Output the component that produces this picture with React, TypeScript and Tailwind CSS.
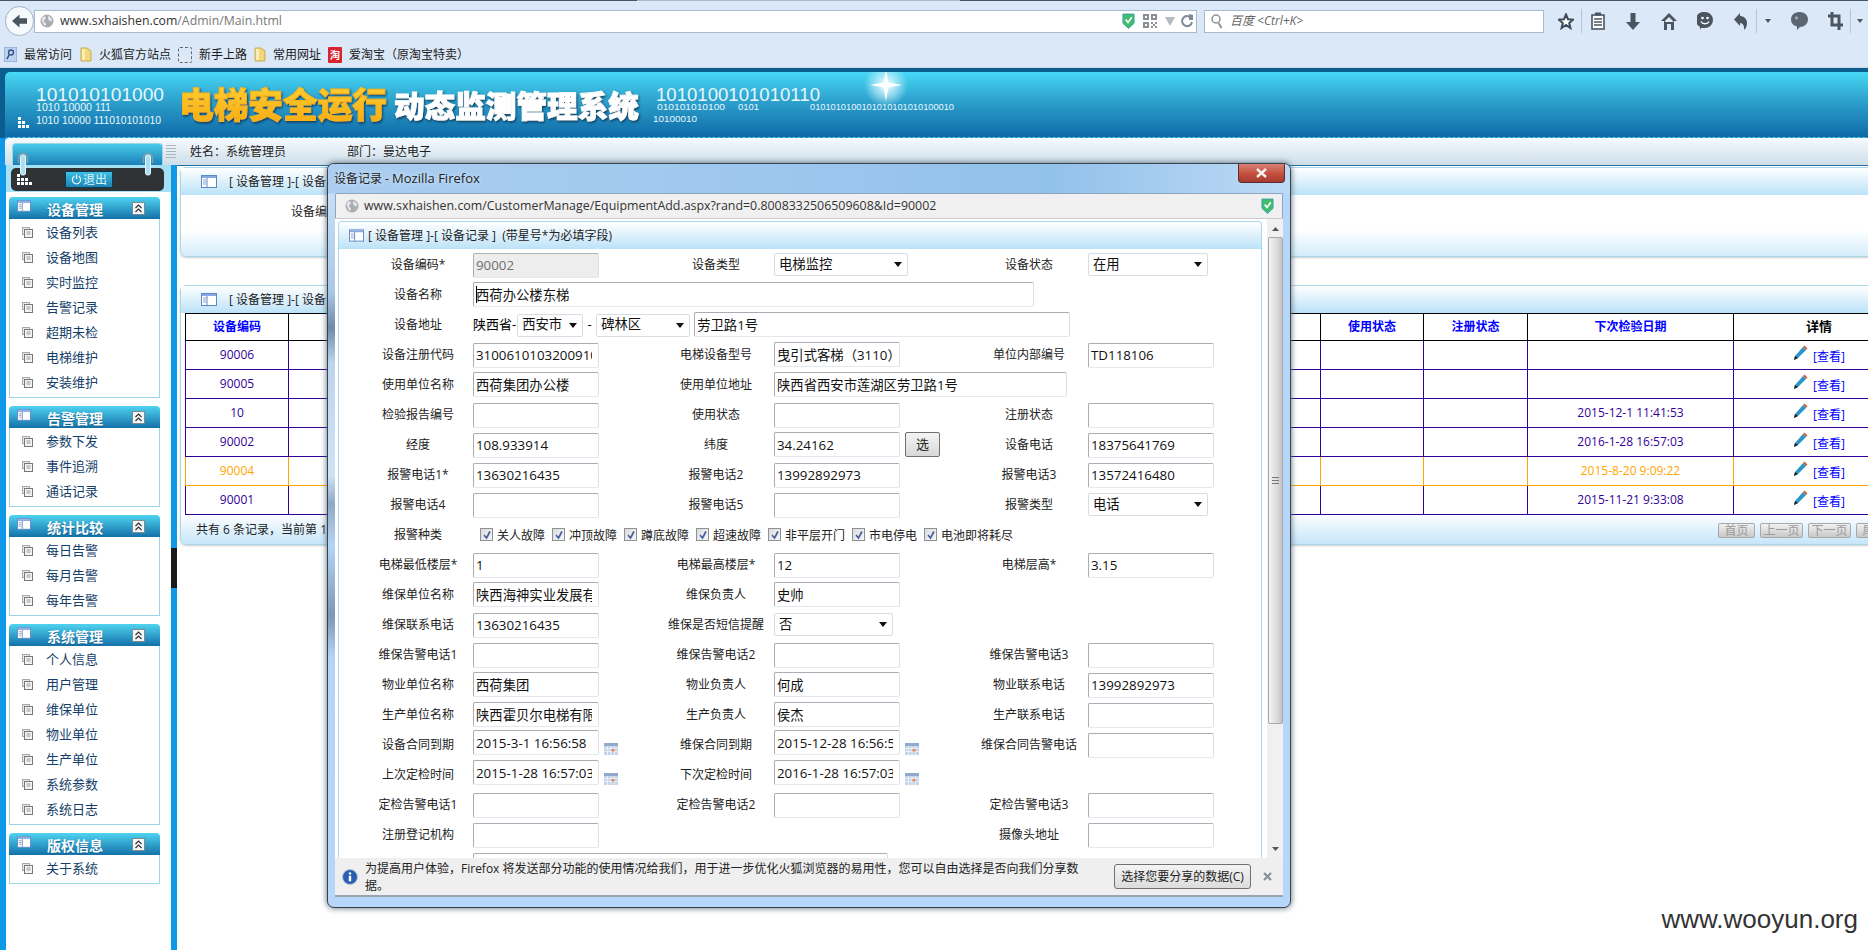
import React from "react"

// -- small drawn icons --
const Globe = ({ className = "" }: { className?: string }) => (
    <svg viewBox="0 0 14 14" className={className}>
        <circle cx="7" cy="7" r="6.5" fill="#a9adb2" />
        <path d="M3 3c2-1 3 0 3 1s-2 1-2 3 2 1 2 3-1 2-2 1-1-3-2-4 0-3 1-4zM9 2c1 1 3 2 3 4s-1 1-2 1-2-2-2-3 0-2 1-2z" fill="#e6e8ea" />
    </svg>
)

const Shield = ({ className = "" }: { className?: string }) => (
    <svg viewBox="0 0 14 17" className={className}>
        <path d="M1 1h12v10l-6 5.500-6-5.500z" fill="#3fbf6a" stroke="#3f9fb8" strokeWidth="1" />
        <path d="M4 7l2.500 3L10.500 4.500" fill="none" stroke="#ffffff" strokeWidth="1.800" />
    </svg>
)

const PanelIcon = ({ className = "" }: { className?: string }) => (
    <svg viewBox="0 0 16 13" className={className}>
        <rect x="0.500" y="0.500" width="15" height="12" fill="#ffffff" stroke="#5f86c8" />
        <rect x="1" y="1" width="14" height="2" fill="#88a8e0" />
        <path d="M6 3v9" stroke="#5f86c8" />
        <path d="M2 5h3M2 7h3M2 9h3" stroke="#8aa0c8" />
    </svg>
)

const ItemIcon = () => (
    <svg viewBox="0 0 11 11" className="w-[11px] h-[11px] shrink-0">
        <rect x="0.500" y="0.500" width="7" height="7" fill="#e8e8e8" stroke="#aaaaaa" />
        <rect x="2.500" y="2.500" width="8" height="8" fill="#f4f4f4" stroke="#777777" />
        <path d="M4.500 5h4M4.500 7h4" stroke="#999999" />
    </svg>
)

const CollapseIcon = () => (
    <svg viewBox="0 0 13 13" className="w-[13px] h-[13px]">
        <rect x="0.500" y="0.500" width="12" height="12" fill="#f4f6f7" stroke="#7d8b94" />
        <path d="M3.500 6l3-3 3 3M3.500 10l3-3 3 3" fill="none" stroke="#333333" strokeWidth="1.200" />
    </svg>
)

const Pencil = () => (
    <svg viewBox="0 0 15 16" className="w-[15px] h-[16px]">
        <path d="M1 15l1-4 8-9 3 3-8 8z" fill="#2d94c8" />
        <path d="M10 2l1.500-1.500 3 3L13 5z" fill="#c9603a" />
        <path d="M1 15l1-4 3 2z" fill="#1b1b1b" />
    </svg>
)

const Calendar = () => (
    <svg viewBox="0 0 14 12" className="w-[14px] h-[12px]">
        <rect width="14" height="12" fill="#c5d3e6" />
        <rect width="14" height="3" fill="#8fa9cf" />
        <path d="M0 5.500h14M0 8.500h14M3.500 3v9M7 3v9M10.500 3v9" stroke="#e9eff7" />
        <rect x="7.500" y="6" width="3" height="2.500" fill="#e2835e" />
    </svg>
)

const Caret = () => (
    <svg viewBox="0 0 8 5" className="w-[8px] h-[5px] shrink-0">
        <path d="M0 0h8L4 5z" fill="#111111" />
    </svg>
)

const ToolIcon = ({ w, line, children }: { w: string; line?: boolean; children: React.ReactNode }) => (
    <div className={`${w} h-[24px] flex items-center justify-center ${line ? "border-l border-[#b6c6d8]" : ""}`}>
        {children}
    </div>
)

// -- browser chrome --
const Toolbar = () => (
    <div className="flex items-center ml-[7px]">
        <ToolIcon w="w-[30px]">
            <svg viewBox="0 0 16 17" className="w-[16px] h-[17px]">
                <path d="M8 1.500l2 4.700 5 .5-3.800 3.300 1.200 5L8 12l-4.400 3 1.200-5L1 6.700l5-.5z" fill="#ffffff" stroke="#3f4a55" strokeWidth="2" />
            </svg>
        </ToolIcon>
        <ToolIcon w="w-[32px]" line>
            <svg viewBox="0 0 14 18" className="w-[14px] h-[18px]">
                <rect x="1" y="3" width="12" height="14" fill="#ffffff" stroke="#4a5560" strokeWidth="1.600" />
                <rect x="4" y="0.500" width="6" height="3" fill="#4a5560" />
                <path d="M3 7h8M3 10h8M3 13h8" stroke="#4a5560" strokeWidth="1.300" />
            </svg>
        </ToolIcon>
        <ToolIcon w="w-[40px]">
            <svg viewBox="0 0 14 17" className="w-[14px] h-[17px]">
                <path d="M4.500 0h5v9H14l-7 8-7-8h4.500z" fill="#4a5560" />
            </svg>
        </ToolIcon>
        <ToolIcon w="w-[32px]">
            <svg viewBox="0 0 16 17" className="w-[16px] h-[17px]">
                <path d="M8 0l8 8h-3v9h-3v-6H6v6H3V8H0z" fill="#4a5560" />
                <path d="M8 4l4 4v1H4V8z" fill="#dfe9f5" />
            </svg>
        </ToolIcon>
        <ToolIcon w="w-[40px]">
            <svg viewBox="0 0 16 18" className="w-[16px] h-[18px]">
                <path d="M8 0a8 8 0 0 1 0 16H4l-1 2v-3A8 8 0 0 1 8 0z" fill="#4a5560" />
                <circle cx="5.500" cy="6" r="1.300" fill="#ffffff" />
                <circle cx="10.500" cy="6" r="1.300" fill="#ffffff" />
                <path d="M4 9.500c1.500 3 6.500 3 8 0" fill="none" stroke="#ffffff" strokeWidth="1.400" />
            </svg>
        </ToolIcon>
        <ToolIcon w="w-[31px]">
            <svg viewBox="0 0 14 17" className="w-[14px] h-[17px]">
                <path d="M6 0v3c4 0 7 3 7 7 0 3-1 5-3 7 .5-4-1-7-4-7v3L0 6.500z" fill="#4a5560" />
            </svg>
        </ToolIcon>
        <ToolIcon w="w-[22px]" line>
            <svg viewBox="0 0 6 4" className="w-[6px] h-[4px]"><path d="M0 0h6L3 4z" fill="#4a5560" /></svg>
        </ToolIcon>
        <ToolIcon w="w-[42px]">
            <svg viewBox="0 0 17 18" className="w-[17px] h-[18px]">
                <path d="M8.500 0c5 0 8.500 3 8.500 7.500S13 15 9 15l-3 3v-3.500C2 13.500 0 11 0 7.500 0 3 3.500 0 8.500 0z" fill="#5a6671" />
                <circle cx="5.500" cy="6" r="1.400" fill="#aeb6bd" />
            </svg>
        </ToolIcon>
        <ToolIcon w="w-[30px]">
            <svg viewBox="0 0 15 18" className="w-[15px] h-[18px]">
                <path d="M4 0v13h11M0 4h11v14" fill="none" stroke="#4a5560" strokeWidth="3" />
            </svg>
        </ToolIcon>
        <ToolIcon w="w-[18px]" line>
            <svg viewBox="0 0 6 4" className="w-[6px] h-[4px]"><path d="M0 0h6L3 4z" fill="#4a5560" /></svg>
        </ToolIcon>
    </div>
)

const Folder = () => (
    <svg viewBox="0 0 12 15" className="w-[12px] h-[15px]">
        <path d="M1 1h6l4 3v10H1z" fill="#f1d77e" stroke="#c8a94c" />
        <rect x="2" y="2" width="3" height="11" fill="#fbeeb5" />
    </svg>
)

const Bookmark = ({ icon, text, className }: { icon: React.ReactNode; text: string; className: string }) => (
    <div className={`flex items-center ${className}`}>
        {icon}
        <span className="ml-[7px] text-[12px] text-[#1b1b1b] whitespace-nowrap">{text}</span>
    </div>
)

const BrowserChrome = () => (
    <div className="bg-[#dbe8f7] h-[68px]">
        <div className="h-[1px] flex">
            <div className="w-[637px] bg-[#46566a]" />
            <div className="w-[323px] bg-[#aab8c8]" />
            <div className="flex-1 bg-[#46566a]" />
        </div>
        <div className="flex items-center h-[37px] pt-[3px] pl-[5px]">
            <div className="w-[29px] h-[30px] rounded-full bg-[#f7fafd] border border-[#9fb1c6] flex items-center justify-center z-10">
                <svg viewBox="0 0 16 14" className="w-[15px] h-[14px]">
                    <path d="M8 0v4h8v6H8v4L0 7z" fill="#4a5560" />
                </svg>
            </div>
            <div className="w-[1163px] h-[23px] bg-white border border-[#a8bace] flex items-center pl-[5px] pr-[3px]">
                <Globe className="w-[14px] h-[14px]" />
                <span className="ml-[6px] text-[12.3px] text-[#777777]">
                    <span className="text-[#333333]">www.sxhaishen.com</span>/Admin/Main.html
                </span>
                <div className="ml-auto flex items-center">
                    <Shield className="w-[13px] h-[16px]" />
                    <svg viewBox="0 0 14 14" className="w-[14px] h-[14px] ml-[8px]">
                        <path d="M0 0h6v6H0zM8 0h6v6H8zM0 8h6v6H0zM8 8h2v2H8zM12 8h2v2h-2zM10 10h2v2h-2zM8 12h2v2H8zM12 12h2v2h-2z" fill="#8a8f96" />
                        <path d="M2 2h2v2H2zM10 2h2v2h-2zM2 10h2v2H2z" fill="#ffffff" />
                    </svg>
                    <svg viewBox="0 0 10 9" className="w-[10px] h-[9px] ml-[8px]"><path d="M0 0h10L5 9z" fill="#b5bac0" /></svg>
                    <svg viewBox="0 0 12 14" className="w-[12px] h-[14px] ml-[6px]">
                        <path d="M10 4a5 5 0 1 0 1 4" fill="none" stroke="#7f8a96" strokeWidth="2" />
                        <path d="M8 0v6h4V1z" fill="#7f8a96" />
                    </svg>
                </div>
            </div>
            <div className="w-[340px] h-[23px] ml-[7px] bg-white border border-[#a8bace] flex items-center pl-[6px]">
                <svg viewBox="0 0 12 15" className="w-[12px] h-[15px]">
                    <circle cx="5" cy="5" r="4" fill="none" stroke="#8b939b" strokeWidth="1.500" />
                    <path d="M7.500 9l3 5" stroke="#8b939b" strokeWidth="2" />
                </svg>
                <span className="ml-[7px] text-[12px] italic text-[#666666]">百度 &lt;Ctrl+K&gt;</span>
            </div>
            <Toolbar />
        </div>
        <div className="flex items-center h-[30px] pt-[4px] border-b border-[#c8d8ea]">
            <Bookmark className="ml-[4px]" text="最常访问" icon={
                <svg viewBox="0 0 13 15" className="w-[13px] h-[15px]">
                    <rect width="13" height="15" fill="#bcd2ee" stroke="#7d9cc5" />
                    <circle cx="7" cy="5.500" r="2.500" fill="none" stroke="#2d4f86" strokeWidth="1.300" />
                    <path d="M5 8l-2 4" stroke="#2d4f86" strokeWidth="1.500" />
                </svg>
            } />
            <Bookmark className="ml-[8px]" text="火狐官方站点" icon={<Folder />} />
            <Bookmark className="ml-[7px]" text="新手上路" icon={
                <div className="w-[14px] h-[16px] border border-dashed border-[#666666] rounded-[2px]" />
            } />
            <Bookmark className="ml-[7px]" text="常用网址" icon={<Folder />} />
            <Bookmark className="ml-[7px]" text="爱淘宝（原淘宝特卖）" icon={
                <div className="w-[14px] h-[16px] bg-[#d9232e] rounded-[1px] flex items-center justify-center text-[10px] leading-none font-bold text-white">淘</div>
            } />
        </div>
    </div>
)

// -- banner --
const Banner = () => (
    <div className="h-[70px] bg-[#0b5c8f] pt-[4px] pl-[5px]">
        <div className="h-[66px] rounded-tl-[5px] bg-[linear-gradient(#47d8f6,#2fa6d0_40%,#0f6aa8)] border-b border-dashed border-[#3b8fc0] overflow-hidden">
            <svg width="1000" height="66" viewBox="5 72 1000 66">
                <defs>
                    <linearGradient id="gold" x1="0" y1="0" x2="0" y2="1">
                        <stop offset="0" stopColor="#ffd53a" />
                        <stop offset="1" stopColor="#f7a80f" />
                    </linearGradient>
                    <radialGradient id="glow">
                        <stop offset="0" stopColor="#ffffff" />
                        <stop offset="0.500" stopColor="#d8f6ff" stopOpacity="0.600" />
                        <stop offset="1" stopColor="#d8f6ff" stopOpacity="0" />
                    </radialGradient>
                    <filter id="shade" x="-5%" y="-20%" width="110%" height="140%">
                        <feDropShadow dx="1" dy="1.500" stdDeviation="1" floodColor="#0a3350" floodOpacity="0.900" />
                    </filter>
                </defs>
                <g fontFamily="'Liberation Sans', sans-serif" fill="#e8f7fd">
                    <text x="36" y="101" fontSize="19" textLength="128" lengthAdjust="spacingAndGlyphs">101010101000</text>
                    <text x="36" y="111" fontSize="10" textLength="75" lengthAdjust="spacingAndGlyphs">1010 10000 111</text>
                    <text x="36" y="124" fontSize="10" textLength="125" lengthAdjust="spacingAndGlyphs">1010 10000 111010101010</text>
                    <text x="656" y="101" fontSize="18" textLength="164" lengthAdjust="spacingAndGlyphs">1010100101010110</text>
                    <text x="657" y="110" fontSize="9" textLength="68" lengthAdjust="spacingAndGlyphs">010101010100</text>
                    <text x="738" y="110" fontSize="9" textLength="21" lengthAdjust="spacingAndGlyphs">0101</text>
                    <text x="810" y="110" fontSize="9" textLength="144" lengthAdjust="spacingAndGlyphs">0101010100101010101010100010</text>
                    <text x="653" y="122" fontSize="9" textLength="44" lengthAdjust="spacingAndGlyphs">10100010</text>
                </g>
                <path d="M18 117h3v3h-3zM18 121h3v3h-3zM22 121h3v3h-3zM18 125h3v3h-3zM22 125h3v3h-3zM26 125h3v3h-3z" fill="#ffffff" />
                <g fontFamily="'Noto Sans CJK SC', sans-serif" fontWeight="900" filter="url(#shade)">
                    <text x="179" y="118" fontSize="35" textLength="208" lengthAdjust="spacingAndGlyphs" fill="url(#gold)" stroke="#f7b51a" strokeWidth="1">电梯安全运行</text>
                    <text x="394" y="117" fontSize="30" textLength="245" lengthAdjust="spacingAndGlyphs" fill="#ffffff" stroke="#ffffff" strokeWidth="0.800">动态监测管理系统</text>
                </g>
                <circle cx="886" cy="85" r="22" fill="url(#glow)" />
                <path d="M886 70l2.500 12.500L902 85l-13.500 2.500L886 101l-2.500-13.500L870 85l13.500-2.500z" fill="#ffffff" />
            </svg>
        </div>
    </div>
)

// -- sidebar --
const menus = [
    { title: "设备管理", items: ["设备列表", "设备地图", "实时监控", "告警记录", "超期未检", "电梯维护", "安装维护"] },
    { title: "告警管理", items: ["参数下发", "事件追溯", "通话记录"] },
    { title: "统计比较", items: ["每日告警", "每月告警", "每年告警"] },
    { title: "系统管理", items: ["个人信息", "用户管理", "维保单位", "物业单位", "生产单位", "系统参数", "系统日志"] },
    { title: "版权信息", items: ["关于系统"] },
]

const Sidebar = () => (
    <aside className="w-[177px] shrink-0 bg-[#0e99e8] flex">
        <div className="w-[165px] ml-[6px] bg-white">
            <div className="h-[27px] bg-[#a6e0f4] pt-[3px] pl-[5px]">
                <div className="w-[153px] h-[23px] rounded-[5px] bg-[#2f3336] flex items-center pl-[6px]">
                    <svg viewBox="0 0 15 11" className="w-[15px] h-[11px]">
                        <path d="M0 0h3v3H0zM0 4h3v3H0zM4 4h3v3H4zM0 8h3v3H0zM4 8h3v3H4zM8 8h3v3H8zM12 8h3v3h-3zM8 4h3v3H8z" fill="#ffffff" />
                    </svg>
                    <div className="ml-[33px] w-[48px] h-[17px] border border-[#0d3a4e] bg-[linear-gradient(#3fbfe3,#1c84b5)] flex items-center justify-center gap-[1px] text-[12px] text-[#d9f3fb]">
                        <svg viewBox="0 0 12 12" className="w-[11px] h-[11px]">
                            <path d="M3.500 2.500a4.500 4.500 0 1 0 5 0" fill="none" stroke="#e6f7fc" strokeWidth="1.400" />
                            <path d="M6 0.500v5" stroke="#e6f7fc" strokeWidth="1.400" />
                        </svg>
                        退出
                    </div>
                </div>
            </div>
            <div className="pl-[3px] pt-[5px] flex flex-col gap-[8px]">
                {menus.map((m) => (
                    <div key={m.title} className="w-[151px]">
                        <div className="h-[22px] rounded-t-[4px] bg-[linear-gradient(#4fd3f0,#1471a9)] flex items-start pl-[8px] relative">
                            <PanelIcon className="w-[14px] h-[12px] mt-[3px]" />
                            <span className="ml-[16px] mt-[3px] text-[14px] leading-[20px] font-bold text-white [text-shadow:0_1px_1px_#0d5e8c]">{m.title}</span>
                            <div className="ml-[29px] mt-[5px]"><CollapseIcon /></div>
                        </div>
                        <div className="border border-t-0 border-[#9ad6e6] pt-[1px] pb-[2px]">
                            {m.items.map((it) => (
                                <div key={it} className="h-[25px] flex items-center pl-[12px]">
                                    <ItemIcon />
                                    <span className="ml-[13px] text-[13px] text-[#143e68]">{it}</span>
                                </div>
                            ))}
                        </div>
                    </div>
                ))}
            </div>
        </div>
        <div className="w-[6px]">
            <div className="h-[383px]" />
            <div className="h-[40px] bg-[#1a1a1a]" />
        </div>
    </aside>
)

const Hook = ({ className }: { className: string }) => (
    <svg viewBox="0 0 12 24" className={`absolute w-[12px] h-[24px] ${className}`}>
        <path d="M1.500 11V6a4.500 4.500 0 0 1 9 0v5" fill="none" stroke="#8b9aa3" strokeWidth="1.500" />
        <rect x="3.500" y="3" width="5" height="20" rx="2" fill="#a9dff2" stroke="#e8f8fd" />
    </svg>
)

// -- main page behind the dialog --
type RowData = { id: string; next?: string; warn?: boolean }

const tableRows: RowData[] = [
    { id: "90006" },
    { id: "90005" },
    { id: "10", next: "2015-12-1 11:41:53" },
    { id: "90002", next: "2016-1-28 16:57:03" },
    { id: "90004", next: "2015-8-20 9:09:22", warn: true },
    { id: "90001", next: "2015-11-21 9:33:08" },
]

const CardHead = ({ children }: { children: React.ReactNode }) => (
    <div className="h-[27px] bg-[linear-gradient(#ffffff,#bbe2f8)] flex items-center pl-[20px]">
        <PanelIcon className="w-[16px] h-[13px]" />
        <span className="ml-[12px] text-[12px] text-[#222222]">{children}</span>
    </div>
)

const PageBtn = ({ text, w }: { text: string; w: string }) => (
    <div className={`${w} h-[15px] rounded-[2px] border border-[#a8a8a8] bg-[linear-gradient(#f2f2f2,#c8c8c8)] text-[12px] leading-[14px] text-[#9a9a9a] text-center`}>
        {text}
    </div>
)

const Main = () => (
    <main className="flex-1 min-w-0 overflow-hidden pl-[3px] pt-[1px] border-t border-[#246f9e]">
        <div className="w-[1760px] h-[90px] rounded-[6px] border border-[#a8d8ea] bg-[linear-gradient(#ffffff_70%,#d4edfb)] shadow-[0_1px_2px_#cccccc]">
            <CardHead>[ 设备管理 ]-[ 设备</CardHead>
            <div className="pl-[110px] pt-[8px] text-[12px] text-[#222222]">设备编</div>
        </div>
        <div className="w-[1760px] h-[260px] mt-[28px] rounded-[6px] border border-[#a8d8ea] bg-[linear-gradient(#ffffff_88%,#c6e6fa)] shadow-[0_1px_2px_#cccccc]">
            <CardHead>[ 设备管理 ]-[ 设备</CardHead>
            <table className="ml-[4px] w-[1720px] table-fixed border-collapse text-[12px] text-center">
                <colgroup>
                    <col className="w-[103px]" />
                    <col className="w-[1032px]" />
                    <col className="w-[103px]" />
                    <col className="w-[104px]" />
                    <col className="w-[206px]" />
                    <col />
                </colgroup>
                <thead>
                    <tr className="h-[27px] font-bold text-[#0000ff]">
                        <th className="border border-black">设备编码</th>
                        <th className="border border-black"></th>
                        <th className="border border-black">使用状态</th>
                        <th className="border border-black">注册状态</th>
                        <th className="border border-black">下次检验日期</th>
                        <th className="border border-black text-black text-[13px]">详情</th>
                    </tr>
                </thead>
                <tbody>
                    {tableRows.map((r) => (
                        <tr key={r.id} className={`h-[29px] ${r.warn ? "text-[#ffa500]" : "text-[#330099]"}`}>
                            <td className={`border ${r.warn ? "border-[#ffa500]" : "border-[#330099]"}`}>{r.id}</td>
                            <td className={`border ${r.warn ? "border-[#ffa500]" : "border-[#330099]"}`}></td>
                            <td className={`border ${r.warn ? "border-[#ffa500]" : "border-[#330099]"}`}></td>
                            <td className={`border ${r.warn ? "border-[#ffa500]" : "border-[#330099]"}`}></td>
                            <td className={`border ${r.warn ? "border-[#ffa500]" : "border-[#330099]"}`}>{r.next}</td>
                            <td className={`border ${r.warn ? "border-[#ffa500]" : "border-[#330099]"}`}>
                                <div className="flex items-start justify-center">
                                    <Pencil />
                                    <span className="ml-[5px] mt-[3px] text-[#0000ff]">[查看]</span>
                                </div>
                            </td>
                        </tr>
                    ))}
                </tbody>
            </table>
            <div className="flex items-center h-[30px]">
                <span className="w-[1537px] pl-[15px] shrink-0 text-[12px] text-[#222222]">共有 6 条记录，当前第 1</span>
                <div className="flex gap-[5px] shrink-0">
                    <PageBtn text="首页" w="w-[37px]" />
                    <PageBtn text="上一页" w="w-[43px]" />
                    <PageBtn text="下一页" w="w-[43px]" />
                    <PageBtn text="尾页" w="w-[37px]" />
                </div>
            </div>
        </div>
    </main>
)

// -- form controls in the dialog --
const Field = ({ value = "", className = "w-[126px]", disabled }: { value?: string; className?: string; disabled?: boolean }) => (
    <input
        readOnly
        value={value}
        className={`h-[25px] rounded-[2px] border border-[#abadb3] border-r-[#dbdfe6] border-b-[#e3e9ef] pl-[2px] pr-[6px] text-[13.33px] outline-none ${
            disabled ? "bg-[#ededed] border-[#b0b0b0] text-[#6d6d6d]" : "bg-white text-[#111111]"
        } ${className}`}
    />
)

const Sel = ({ text, className }: { text: string; className: string }) => (
    <div className={`h-[23px] mt-[1px] rounded-[2px] border border-[#d8dde3] bg-white flex items-center justify-between pl-[4px] pr-[5px] text-[13.33px] text-[#111111] shrink-0 ${className}`}>
        <span>{text}</span>
        <Caret />
    </div>
)

const DateField = ({ value }: { value: string }) => (
    <div className="flex items-end -mt-[2px] w-max">
        <Field value={value} />
        <div className="ml-[5px] h-[12px] flex"><Calendar /></div>
    </div>
)

type Cell = [string, React.ReactNode] | undefined

const Row = ({ a, b, c }: { a?: Cell; b?: Cell; c?: Cell }) => (
    <div className="grid grid-cols-[110px_188px_113px_201px_113px_1fr] h-[30px] items-start">
        <div className="h-[25px] leading-[25px] text-[12px] text-center text-[#222222]">{a?.[0]}</div>
        <div>{a?.[1]}</div>
        <div className="h-[25px] leading-[25px] text-[12px] text-center text-[#222222] pr-[3px] whitespace-nowrap">{b?.[0]}</div>
        <div>{b?.[1]}</div>
        <div className="h-[25px] leading-[25px] text-[12px] text-center text-[#222222] pr-[5px] whitespace-nowrap">{c?.[0]}</div>
        <div>{c?.[1]}</div>
    </div>
)

const Check = ({ text, w }: { text: string; w: string }) => (
    <div className={`${w} flex items-center shrink-0`}>
        <div className="w-[13px] h-[13px] border border-[#8e8f8f] bg-[linear-gradient(135deg,#d8dbe0,#f8f8f8)] flex items-center justify-center">
            <svg viewBox="0 0 10 10" className="w-[10px] h-[10px]">
                <path d="M2 5l2.500 3L8 1.500" fill="none" stroke="#4a5f9c" strokeWidth="1.700" />
            </svg>
        </div>
        <span className="ml-[4px] mt-[2px] text-[12px] text-[#222222] whitespace-nowrap">{text}</span>
    </div>
)

const EquipmentForm = () => (
    <div className="pl-[24px] pt-[3px]">
        <Row
            a={["设备编码*", <Field value="90002" disabled />]}
            b={["设备类型", <Sel text="电梯监控" className="w-[134px]" />]}
            c={["设备状态", <Sel text="在用" className="w-[120px]" />]}
        />
        <Row a={["设备名称", (
            <div className="relative w-max">
                <Field value="西荷办公楼东梯" className="w-[561px]" />
                <div className="absolute left-[3px] top-[4px] w-[1px] h-[17px] bg-black" />
            </div>
        )]} />
        <Row a={["设备地址", (
            <div className="flex items-center w-max text-[13px]">
                <span>陕西省-</span>
                <Sel text="西安市" className="w-[66px] ml-[1px]" />
                <span className="w-[13px] text-center">-</span>
                <Sel text="碑林区" className="w-[94px]" />
                <Field value="劳卫路1号" className="w-[376px] ml-[4px]" />
            </div>
        )]} />
        <Row
            a={["设备注册代码", <Field value="31006101032009100126" />]}
            b={["电梯设备型号", <Field value="曳引式客梯（3110）" />]}
            c={["单位内部编号", <Field value="TD118106" />]}
        />
        <Row
            a={["使用单位名称", <Field value="西荷集团办公楼" />]}
            b={["使用单位地址", <Field value="陕西省西安市莲湖区劳卫路1号" className="w-[293px]" />]}
        />
        <Row a={["检验报告编号", <Field />]} b={["使用状态", <Field />]} c={["注册状态", <Field />]} />
        <Row
            a={["经度", <Field value="108.933914" />]}
            b={["纬度", (
                <div className="flex w-max">
                    <Field value="34.24162" />
                    <div className="ml-[5px] w-[35px] h-[25px] rounded-[2px] border border-[#707070] bg-[linear-gradient(#f4f4f4,#d8d8d8)] text-[13px] leading-[23px] text-center text-[#222222]">选</div>
                </div>
            )]}
            c={["设备电话", <Field value="18375641769" />]}
        />
        <Row
            a={["报警电话1*", <Field value="13630216435" />]}
            b={["报警电话2", <Field value="13992892973" />]}
            c={["报警电话3", <Field value="13572416480" />]}
        />
        <Row a={["报警电话4", <Field />]} b={["报警电话5", <Field />]} c={["报警类型", <Sel text="电话" className="w-[120px]" />]} />
        <Row a={["报警种类", (
            <div className="flex items-center w-max h-[25px] pl-[7px]">
                <Check text="关人故障" w="w-[72px]" />
                <Check text="冲顶故障" w="w-[72px]" />
                <Check text="蹲底故障" w="w-[72px]" />
                <Check text="超速故障" w="w-[72px]" />
                <Check text="非平层开门" w="w-[84px]" />
                <Check text="市电停电" w="w-[72px]" />
                <Check text="电池即将耗尽" w="w-[90px]" />
            </div>
        )]} />
        <Row
            a={["电梯最低楼层*", <Field value="1" />]}
            b={["电梯最高楼层*", <Field value="12" />]}
            c={["电梯层高*", <Field value="3.15" />]}
        />
        <Row a={["维保单位名称", <Field value="陕西海神实业发展有限公司" />]} b={["维保负责人", <Field value="史帅" />]} />
        <Row a={["维保联系电话", <Field value="13630216435" />]} b={["维保是否短信提醒", <Sel text="否" className="w-[119px]" />]} />
        <Row a={["维保告警电话1", <Field />]} b={["维保告警电话2", <Field />]} c={["维保告警电话3", <Field />]} />
        <Row
            a={["物业单位名称", <Field value="西荷集团" />]}
            b={["物业负责人", <Field value="何成" />]}
            c={["物业联系电话", <Field value="13992892973" />]}
        />
        <Row
            a={["生产单位名称", <Field value="陕西霍贝尔电梯有限公司" />]}
            b={["生产负责人", <Field value="侯杰" />]}
            c={["生产联系电话", <Field />]}
        />
        <Row
            a={["设备合同到期", <DateField value="2015-3-1 16:56:58" />]}
            b={["维保合同到期", <DateField value="2015-12-28 16:56:58" />]}
            c={["维保合同告警电话", <Field />]}
        />
        <Row a={["上次定检时间", <DateField value="2015-1-28 16:57:03" />]} b={["下次定检时间", <DateField value="2016-1-28 16:57:03" />]} />
        <Row a={["定检告警电话1", <Field />]} b={["定检告警电话2", <Field />]} c={["定检告警电话3", <Field />]} />
        <Row a={["注册登记机构", <Field />]} c={["摄像头地址", <Field />]} />
        <Row a={["", <Field className="w-[415px]" />]} />
    </div>
)

const Dialog = () => (
    <div className="absolute left-[327px] top-[163px] w-[964px] h-[745px] rounded-[7px] border border-[#38424c] bg-[#b6d6fa] overflow-hidden shadow-[0_0_6px_#556677]">
        <div className="absolute left-0 top-[30px] bottom-[10px] w-[7px] bg-[linear-gradient(#c6dff5,#a9c8e6_14%,#6f8aa8_19%,#bcd4ec_24%,#cfe3f6_40%,#8fa9c4_44%,#b5d5f5_50%,#7d97b4_60%,#b5d5f5_66%,#b6d6fa)]" />
        <div className="h-[29px] flex justify-between bg-[linear-gradient(90deg,#aacdf0,#a0c8ee_40%,#92c1ea_75%,#bddaf6)]">
            <span className="ml-[6px] mt-[5px] text-[12px] leading-[18px] text-[#222222] [text-shadow:0_0_4px_#e6f2fc]">设备记录 - <span className="text-[13px]">Mozilla Firefox</span></span>
            <div className="mr-[5px] w-[47px] h-[19px] rounded-b-[4px] border border-t-0 border-[#5c2a2a] bg-[linear-gradient(#d98074,#c4503f_55%,#a53a2e)] flex items-center justify-center">
                <svg viewBox="0 0 11 10" className="w-[11px] h-[10px]">
                    <path d="M1 1l9 8M10 1l-9 8" stroke="#f4f4f4" strokeWidth="2.400" />
                </svg>
            </div>
        </div>
        <div className="mx-[7px]">
            <div className="h-[25px] rounded-t-[2px] border border-b-0 border-[#8aa6c2] bg-[#f0f0f0] flex items-center pl-[9px] pr-[8px]">
                <Globe className="w-[14px] h-[14px]" />
                <span className="ml-[5px] text-[12.4px] text-[#333333]">www.sxhaishen.com/CustomerManage/EquipmentAdd.aspx?rand=0.8008332506509608&amp;Id=90002</span>
                <Shield className="ml-auto w-[13px] h-[16px]" />
            </div>
            <div className="h-[640px] bg-white flex border-t border-[#c8ccd0]">
                <div className="flex-1 min-w-0 pl-[3px] pr-[5px] pt-[2px]">
                    <div className="h-full rounded-t-[4px] border border-b-0 border-[#a9d9f0] overflow-hidden">
                        <div className="h-[27px] bg-[linear-gradient(#ffffff,#bbe2f8)] flex items-center pl-[10px]">
                            <PanelIcon className="w-[15px] h-[13px]" />
                            <span className="ml-[4px] text-[12px] text-[#222222] whitespace-pre">[ 设备管理 ]-[ 设备记录 ]  (带星号*为必填字段)</span>
                        </div>
                        <EquipmentForm />
                    </div>
                </div>
                <div className="w-[16px] bg-[#f0f0f0] flex flex-col items-center">
                    <svg viewBox="0 0 7 4" className="w-[7px] h-[4px] mt-[8px]"><path d="M3.500 0L7 4H0z" fill="#555555" /></svg>
                    <div className="w-[15px] h-[487px] mt-[6px] rounded-[2px] border border-[#a8a8a8] bg-[linear-gradient(90deg,#f4f4f4,#dcdcdc_60%,#c4c4c4)] flex items-center justify-center">
                        <div className="w-[7px] h-[7px] border-y border-[#777777] flex items-center"><div className="w-full h-[1px] bg-[#777777]" /></div>
                    </div>
                    <svg viewBox="0 0 7 4" className="w-[7px] h-[4px] mt-auto mb-[7px]"><path d="M0 0h7L3.500 4z" fill="#555555" /></svg>
                </div>
            </div>
            <div className="h-[39px] bg-[#efefef] border-b-2 border-[#9aa4ae] flex items-center pl-[7px] pr-[10px]">
                <svg viewBox="0 0 16 16" className="w-[16px] h-[16px] shrink-0">
                    <circle cx="8" cy="8" r="7.500" fill="#2a5fb4" stroke="#b9c4d2" />
                    <circle cx="8" cy="4.500" r="1.300" fill="#ffffff" />
                    <rect x="6.800" y="6.800" width="2.400" height="5.500" fill="#ffffff" />
                </svg>
                <p className="ml-[7px] w-[725px] text-[12px] leading-[17px] text-[#222222] shrink-0">
                    为提高用户体验，Firefox 将发送部分功能的使用情况给我们，用于进一步优化火狐浏览器的易用性，您可以自由选择是否向我们分享数据。
                </p>
                <div className="ml-[24px] w-[137px] h-[25px] rounded-[3px] border border-[#707070] bg-[linear-gradient(#f4f4f4,#dcdcdc)] text-[12px] leading-[23px] text-center text-[#222222]">
                    选择您要分享的数据(C)
                </div>
                <svg viewBox="0 0 9 9" className="ml-[12px] w-[9px] h-[9px]">
                    <path d="M1 1l7 7M8 1l-7 7" stroke="#8a9096" strokeWidth="2.200" />
                </svg>
            </div>
        </div>
    </div>
)

export default function App() {
    return (
        <div className="relative w-[1868px] h-[950px] overflow-hidden bg-white [font-family:'Open_Sans','Noto_Sans_CJK_SC',sans-serif]">
            <BrowserChrome />
            <Banner />
            <div className="h-[27px] bg-[#0e99e8] pl-[5px]">
                <div className="h-full rounded-tl-[4px] bg-[linear-gradient(#f6fbff,#cddee8)] flex items-end pl-[7px]">
                    <div className="w-[151px] h-[22px] rounded-t-[4px] bg-[linear-gradient(#49cbea,#1b7fb6)] border border-b-0 border-[#9ad6e6]" />
                    <div className="self-center ml-[3px] w-[10px] flex flex-col gap-[2px]">
                        <div className="h-[1px] bg-[#aab4bb]" />
                        <div className="h-[1px] bg-[#aab4bb]" />
                        <div className="h-[1px] bg-[#aab4bb]" />
                        <div className="h-[1px] bg-[#aab4bb]" />
                        <div className="h-[1px] bg-[#aab4bb]" />
                    </div>
                    <span className="self-center ml-[14px] text-[12px] text-[#222222]">姓名：系统管理员</span>
                    <span className="self-center ml-[61px] text-[12px] text-[#222222]">部门：曼达电子</span>
                </div>
            </div>
            <div className="flex h-[785px]">
                <Sidebar />
                <Main />
            </div>
            <Hook className="left-[17px] top-[152px]" />
            <Hook className="left-[142px] top-[152px]" />
            <Dialog />
            <div className="absolute right-[10px] bottom-[16px] text-[26px] leading-[30px] text-[#333333] [font-family:'Liberation_Sans',sans-serif]">
                www.wooyun.org
            </div>
        </div>
    )
}
